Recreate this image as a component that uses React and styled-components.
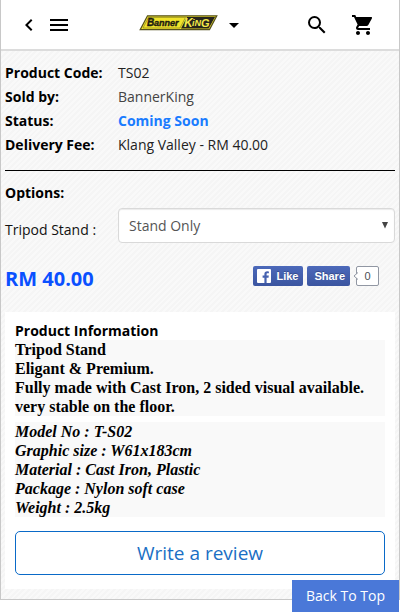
import React from "react";
import styled, { createGlobalStyle } from "styled-components";
import {
  MdArrowDropDown,
  MdChevronLeft,
  MdMenu,
  MdSearch,
  MdShoppingCart,
} from "react-icons/md";

const GlobalStyle = createGlobalStyle`
  * {
    box-sizing: border-box;
  }

  body {
    margin: 0;
    background: #fff;
    color: #000;
    font-family: "Open Sans", "Noto Sans", sans-serif;
    font-size: 14px;
    line-height: 24px;
  }
`;

// Styled Components
const Page = styled.div`
  border: 1px solid #c8c8c8;
  border-top: 0;
  background: repeating-linear-gradient(
    135deg,
    #f5f5f5 0,
    #f5f5f5 2px,
    #f9f9f9 2px,
    #f9f9f9 4px
  );
`;

const Header = styled.header`
  display: flex;
  align-items: center;
  justify-content: space-between;
  height: 51px;
  padding: 0 24px 0 16px;
  background: #fff;
  border-bottom: 2px solid #dcdcdc;
`;

const HeaderGroup = styled.div`
  display: flex;
  align-items: center;
  gap: ${({ $gap }) => $gap || 0}px;
`;

const Brand = styled(HeaderGroup)`
  padding-left: 8px;
`;

const IconButton = styled.button`
  display: flex;
  padding: 0;
  border: 0;
  background: none;
  color: #000;
  font-size: 24px;
  cursor: pointer;
`;

const LogoLink = styled.a`
  display: flex;
  padding-bottom: 4px;
`;

const Details = styled.section`
  padding: 10px 4px 21px;
`;

const DetailList = styled.dl`
  display: grid;
  grid-template-columns: 113px 1fr;
  margin: 0 0 13px;
`;

const DetailTerm = styled.dt`
  font-weight: 700;
`;

const DetailValue = styled.dd`
  margin: 0;
  color: ${({ $tone }) => $tone || "#222"};
  font-weight: ${({ $strong }) => ($strong ? 700 : 400)};
`;

const Divider = styled.hr`
  height: 1px;
  margin: 0 0 10px;
  border: 0;
  background: #000;
`;

const SectionTitle = styled.h2`
  margin: 0;
  font-size: 14px;
  font-weight: 700;
  line-height: ${({ $line }) => $line || 24}px;
`;

const OptionRow = styled.div`
  display: grid;
  grid-template-columns: 113px 1fr;
  margin-top: 3px;
`;

const OptionLabel = styled.label`
  padding-top: 10px;
  color: #111;
`;

const SelectBox = styled.div`
  position: relative;
`;

const Select = styled.select`
  display: block;
  width: 100%;
  height: 35px;
  padding: 0 24px 0 10px;
  border: 1px solid #d9d9d9;
  border-radius: 4px;
  background: #fff;
  box-shadow: inset 0 1px 1px rgba(0, 0, 0, 0.08);
  color: #555;
  font: inherit;
  appearance: none;
`;

const SelectArrow = styled.svg`
  position: absolute;
  top: 14px;
  right: 7px;
  pointer-events: none;
`;

const PriceRow = styled.div`
  display: flex;
  align-items: center;
  justify-content: space-between;
  margin-top: 24px;
  padding-right: 16px;
`;

const Price = styled.strong`
  color: #0a50ff;
  font-size: 20px;
`;

const Social = styled.div`
  display: flex;
  align-items: center;
  gap: 4px;
  margin-top: -6px;
`;

const SocialButton = styled.button`
  display: flex;
  align-items: center;
  gap: 5px;
  height: 20px;
  padding: 0 ${({ $padRight }) => $padRight}px 0 ${({ $padLeft }) => $padLeft}px;
  border: 0;
  border-radius: 2px;
  background: linear-gradient(#4c69ba, #3b55a0);
  color: #fff;
  font: 700 11px "Liberation Sans", Arial, sans-serif;
  text-shadow: 0 -1px 0 #354c8c;
  cursor: pointer;
`;

const ShareCount = styled.span`
  position: relative;
  margin-left: 2px;
  width: 23px;
  height: 20px;
  border: 1px solid #9197a3;
  border-radius: 2px;
  background: #fff;
  color: #4b4f56;
  font: 11px/18px "Liberation Sans", Arial, sans-serif;
  text-align: center;

  svg {
    position: absolute;
    top: 5px;
    left: -4px;
  }
`;

const InfoCard = styled.section`
  margin: 0 4px;
  padding: 10px 10px 14px;
  background: #fff;
`;

const InfoBlock = styled.p`
  margin: 0 0 ${({ $gap }) => $gap}px;
  background: #f9f9f9;
  font-family: "Liberation Serif", "Times New Roman", serif;
  font-size: 16px;
  font-style: ${({ $italic }) => ($italic ? "italic" : "normal")};
  font-weight: 700;
  line-height: 19px;
`;

const ReviewButton = styled.button`
  width: 100%;
  height: 44px;
  padding: 0;
  border: 1px solid #0a6ac8;
  border-radius: 5px;
  background: #fff;
  color: #1a6fc4;
  font: 19px "Open Sans", "Noto Sans", sans-serif;
  cursor: pointer;
`;

const PageEnd = styled.div`
  height: 10px;
`;

const BackToTop = styled.a`
  position: fixed;
  right: 1px;
  bottom: 1px;
  padding: 4px 14px;
  background: #4a78d8;
  color: #fff;
  text-decoration: none;
`;

const DETAILS = [
  { term: "Product Code:", value: "TS02" },
  { term: "Sold by:", value: "BannerKing", tone: "#444" },
  { term: "Status:", value: "Coming Soon", tone: "#1a7cff", strong: true },
  { term: "Delivery Fee:", value: "Klang Valley - RM 40.00" },
];

const DESCRIPTION = [
  "Tripod Stand",
  "Eligant & Premium.",
  "Fully made with Cast Iron, 2 sided visual available.",
  "very stable on the floor.",
];

const SPECS = [
  "Model No : T-S02",
  "Graphic size : W61x183cm",
  "Material : Cast Iron, Plastic",
  "Package : Nylon soft case",
  "Weight : 2.5kg",
];

const Lines = ({ items }) =>
  items.map((line, index) => (
    <React.Fragment key={line}>
      {index > 0 && <br />}
      {line}
    </React.Fragment>
  ));

const Logo = () => (
  <svg width="79" height="16" viewBox="0 0 79 16">
    <path d="M8.5 0.8H77.8L70.5 14.6H1.2Z" fill="#f0e32a" stroke="#55501c" strokeWidth="1.2" />
    <path d="M9.5 2.4H46.5L41 13H4Z" fill="none" stroke="#8b831f" strokeWidth="0.7" />
    <path d="M48 2H76L69.6 13.4H42Z" fill="#26241c" />
    <g fontFamily="Liberation Sans, Arial, sans-serif" fontWeight="700" fontStyle="italic">
      <text x="8" y="11.4" fontSize="10" fill="#1d1b10" stroke="#1d1b10" strokeWidth="0.4">
        B
      </text>
      <text x="15" y="11.4" fontSize="9" fill="#1d1b10" stroke="#1d1b10" strokeWidth="0.4">
        anner
      </text>
      <text x="45" y="12.4" fontSize="12" fill="#f3e94a">
        K
      </text>
      <text x="53" y="11.4" fontSize="9" fill="#f3e94a">
        iN
      </text>
      <text x="62" y="12" fontSize="11" fill="#f3e94a">
        G
      </text>
    </g>
  </svg>
);

const FacebookMark = () => (
  <svg width="14" height="14" viewBox="0 0 14 14">
    <rect width="14" height="14" rx="1" fill="#fff" />
    <path
      d="M9.6 14V8.7h1.9l.3-2.1H9.6V5.3c0-.6.2-1 1.1-1h1.2V2.4a14 14 0 0 0-1.7-.1C8.5 2.3 7.4 3.3 7.4 5.1v1.5H5.6v2.1h1.8V14Z"
      fill="#4662b0"
    />
  </svg>
);

const App = () => {
  return (
    <>
      <GlobalStyle />
      <Page id="top">
        <Header>
          <HeaderGroup $gap={6}>
            <IconButton aria-label="Back">
              <MdChevronLeft />
            </IconButton>
            <IconButton aria-label="Menu">
              <MdMenu />
            </IconButton>
          </HeaderGroup>
          <Brand $gap={4}>
            <LogoLink href="#top" aria-label="BannerKing">
              <Logo />
            </LogoLink>
            <IconButton aria-label="More">
              <MdArrowDropDown />
            </IconButton>
          </Brand>
          <HeaderGroup $gap={22}>
            <IconButton aria-label="Search">
              <MdSearch />
            </IconButton>
            <IconButton aria-label="Cart">
              <MdShoppingCart />
            </IconButton>
          </HeaderGroup>
        </Header>

        <Details>
          <DetailList>
            {DETAILS.map(({ term, value, tone, strong }) => (
              <React.Fragment key={term}>
                <DetailTerm>{term}</DetailTerm>
                <DetailValue $tone={tone} $strong={strong}>
                  {value}
                </DetailValue>
              </React.Fragment>
            ))}
          </DetailList>

          <Divider />

          <SectionTitle>Options:</SectionTitle>
          <OptionRow>
            <OptionLabel htmlFor="stand">Tripod Stand :</OptionLabel>
            <SelectBox>
              <Select id="stand" defaultValue="stand-only">
                <option value="stand-only">Stand Only</option>
              </Select>
              <SelectArrow width="6" height="7" viewBox="0 0 6 7">
                <path d="M0 0H6L3 6.5Z" fill="#444" />
              </SelectArrow>
            </SelectBox>
          </OptionRow>

          <PriceRow>
            <Price>RM 40.00</Price>
            <Social>
              <SocialButton $padLeft={4} $padRight={5}>
                <FacebookMark />
                Like
              </SocialButton>
              <SocialButton $padLeft={7} $padRight={5}>
                Share
              </SocialButton>
              <ShareCount>
                <svg width="5" height="8" viewBox="0 0 5 8">
                  <path d="M5 0.5L1 4L5 7.5" fill="#fff" stroke="#9197a3" />
                </svg>
                0
              </ShareCount>
            </Social>
          </PriceRow>
        </Details>

        <InfoCard>
          <SectionTitle $line={18}>Product Information</SectionTitle>
          <InfoBlock $gap={6}>
            <Lines items={DESCRIPTION} />
          </InfoBlock>
          <InfoBlock $gap={14} $italic>
            <Lines items={SPECS} />
          </InfoBlock>
          <ReviewButton>Write a review</ReviewButton>
        </InfoCard>
        <PageEnd />
      </Page>
      <BackToTop href="#top">Back To Top</BackToTop>
    </>
  );
};

export default App;
